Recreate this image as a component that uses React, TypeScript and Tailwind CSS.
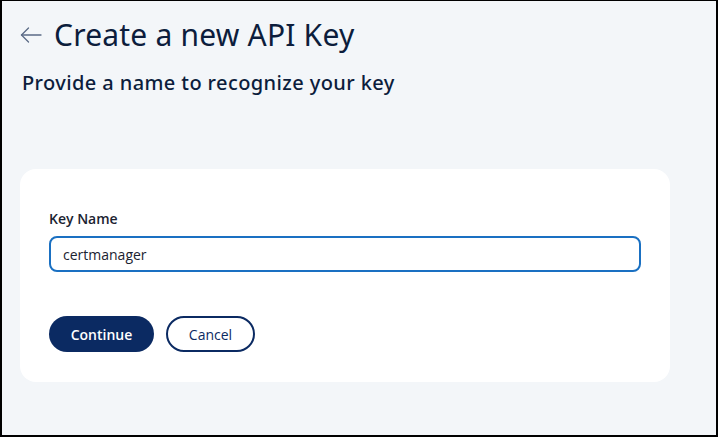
import React, { useEffect, useRef, useState } from "react";

const ArrowLeft = () => (
  <svg width="22" height="16" viewBox="0 0 22 16" fill="none" stroke="#5b6b86" strokeWidth="1.3" strokeLinecap="round" strokeLinejoin="round">
    <path d="M21 8H1.5" />
    <path d="M8.5 1L1.5 8l7 7" />
  </svg>
);

const App = () => {
  const [name, setName] = useState("certmanager");
  const inputRef = useRef<HTMLInputElement>(null);

  // put the caret at the end of the value, like the screenshot
  useEffect(() => {
    const el = inputRef.current;
    if (el) {
      el.focus();
      el.setSelectionRange(el.value.length, el.value.length);
    }
  }, []);

  return (
    <div className="w-[718px] h-[437px] overflow-hidden border-l-2 border-r-2 border-b-2 border-t border-black bg-[#f3f6f9] font-['Open_Sans',sans-serif]">
      <div className="flex items-center gap-[12px] pl-[18px] pt-[16px]">
        <ArrowLeft />
        <h1 className="font-['Noto_Sans',sans-serif] text-[30px] leading-[36px] tracking-[0.2px] text-[#0c1d3c]">
          Create a new API Key
        </h1>
      </div>
      <h2 className="pl-[20px] pt-[17px] font-['Noto_Sans',sans-serif] text-[20px] leading-[26px] tracking-[0.4px] font-medium text-[#0c1d3c]">
        Provide a name to recognize your key
      </h2>

      <div className="ml-[18px] mt-[73px] w-[650px] h-[213px] rounded-[16px] bg-white px-[29px] pt-[41px]">
        <label className="block text-[14px] leading-[18px] font-semibold text-[#1b2331]">Key Name</label>
        <div className="mt-[8px] flex h-[36px] w-[592px] items-center rounded-[8px] border-2 border-[#1a70c2] px-[12px]">
          <input
            ref={inputRef}
            value={name}
            onChange={(e) => setName(e.target.value)}
            className="w-full bg-transparent text-[14px] text-[#1b2331] caret-[#0c1d3c] outline-none"
          />
        </div>
        <div className="mt-[44px] flex gap-[12px]">
          <button className="h-[36px] w-[105px] rounded-full bg-[#0b2a62] text-[14px] font-semibold text-white">
            Continue
          </button>
          <button className="h-[36px] w-[89px] rounded-full border-2 border-[#0b2a62] bg-white text-[14px] font-medium text-[#0b2a62]">
            Cancel
          </button>
        </div>
      </div>
    </div>
  );
};

export default App;
